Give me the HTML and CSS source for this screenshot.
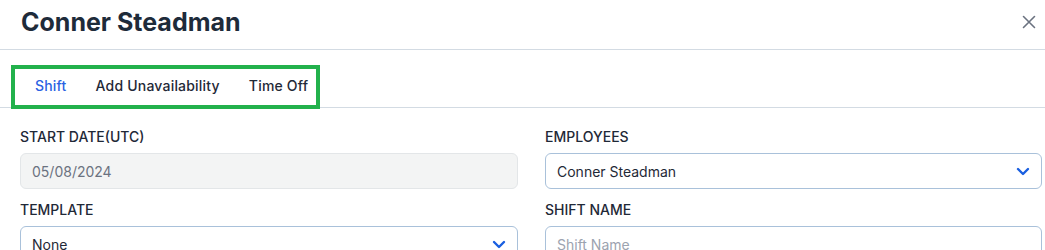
FILE: index.html
```html
<!DOCTYPE html>
<html>
<head>
<meta charset="utf-8">
<link rel="stylesheet" href="styles.css">
</head>
<body>
<div class="modal">
  <div class="header">
    <h1 class="title">Conner Steadman</h1>
    <span class="close" aria-label="Close">
      <svg width="14" height="14" viewBox="0 0 14 14"><path d="M1.5 1.5L12.5 12.5M12.5 1.5L1.5 12.5" stroke="#6b7280" stroke-width="1.6" stroke-linecap="round"/></svg>
    </span>
  </div>
  <div class="tabs">
    <div class="tab-group">
      <span class="tab active">Shift</span>
      <span class="tab">Add Unavailability</span>
      <span class="tab">Time Off</span>
    </div>
  </div>
  <div class="form">
    <div class="field">
      <label class="label">START DATE(UTC)</label>
      <div class="input disabled">05/08/2024</div>
    </div>
    <div class="field">
      <label class="label">EMPLOYEES</label>
      <div class="input select">Conner Steadman
        <svg class="chev" width="14" height="9" viewBox="0 0 14 9"><path d="M2 2L7 7L12 2" fill="none" stroke="#1a5fe0" stroke-width="2.4" stroke-linecap="round" stroke-linejoin="round"/></svg>
      </div>
    </div>
    <div class="field">
      <label class="label">TEMPLATE</label>
      <div class="input select">None
        <svg class="chev" width="14" height="9" viewBox="0 0 14 9"><path d="M2 2L7 7L12 2" fill="none" stroke="#1a5fe0" stroke-width="2.4" stroke-linecap="round" stroke-linejoin="round"/></svg>
      </div>
    </div>
    <div class="field">
      <label class="label">SHIFT NAME</label>
      <div class="input placeholder">Shift Name</div>
    </div>
  </div>
</div>
</body>
</html>
```
FILE: styles.css
```css
* { box-sizing: border-box; }
html, body { margin: 0; padding: 0; background: #fff; }
body { font-family: Inter, "Liberation Sans", sans-serif; color: #1f2937; }
.modal { width: 1045px; }
.header {
  height: 50px;
  display: flex;
  align-items: center;
  justify-content: space-between;
  padding: 0 9px 0 21px;
  border-bottom: 1px solid #d3dbe3;
}
.title {
  margin: 0;
  font-size: 25px;
  font-weight: 700;
  color: #1e2b3a;
  letter-spacing: 0;
  line-height: 30px;
  padding-bottom: 6px;
}
.close { display: flex; width: 14px; height: 14px; align-items: center; justify-content: center; margin-bottom: 5px; }
.tabs {
  margin-top: 15px;
  border-bottom: 1px solid #d3dbe3;
  height: 43px;
  padding-left: 11px;
}
.tab-group {
  display: inline-flex;
  width: 309px;
  height: 44px;
  border: 4px solid #22b14c;
  padding-left: 20px;
  align-items: center;
  white-space: nowrap;
}
.tab {
  font-size: 14px;
  font-weight: 500;
  letter-spacing: 0.2px;
  color: #1f2937;
  margin-right: 29px;
  line-height: 20px;
  padding-bottom: 3px;
  white-space: nowrap;
}
.tab:last-child { margin-right: 0; }
.tab.active { color: #2b62e3; }
.form {
  display: grid;
  grid-template-columns: 498px 497px;
  column-gap: 27px;
  padding: 19px 0 0 20px;
  row-gap: 11px;
}
.field { display: flex; flex-direction: column; }
.label {
  font-size: 14px;
  font-weight: 500;
  line-height: 20px;
  color: #1f2937;
  margin-bottom: 6px;
}
.input {
  height: 36px;
  border: 1px solid #a9c1da;
  border-radius: 6px;
  padding: 0 11px;
  display: flex;
  align-items: center;
  justify-content: space-between;
  font-size: 14px;
  color: #1f2937;
}
.input.disabled { background: #f3f4f4; border-color: #e3e6e8; color: #6b7280; }
.input.placeholder { color: #9ca3af; }
.chev { margin-right: 0; }
```
